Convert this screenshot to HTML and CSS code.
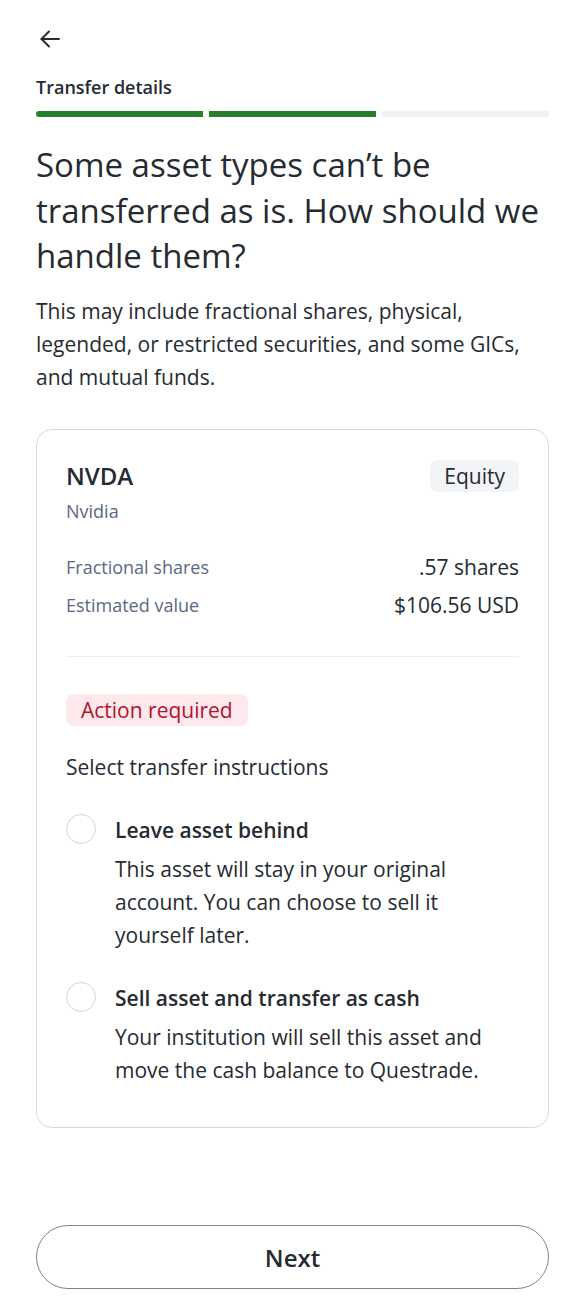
FILE: index.html
```html
<!DOCTYPE html>
<html lang="en">

<head>
    <meta charset="UTF-8">
    <meta name="viewport" content="width=device-width, initial-scale=1.0">
    <title>Transfer details</title>
    <link rel="stylesheet" href="styles.css">
</head>

<body>
    <div class="page">

        <!-- Top bar with back button -->
        <div class="topbar">
            <button class="back" aria-label="Back">
                <svg width="24" height="24" viewBox="0 0 24 24" fill="none" stroke="currentColor" stroke-width="2" stroke-linecap="round" stroke-linejoin="round">
                    <path d="M21 12H3.5" />
                    <path d="M11 4.5L3.5 12L11 19.5" />
                </svg>
            </button>
        </div>

        <!-- Step title and progress -->
        <div class="step">
            <p class="step-title">Transfer details</p>
            <div class="progress">
                <span class="bar done"></span>
                <span class="bar done"></span>
                <span class="bar"></span>
            </div>
        </div>

        <h1 class="heading">Some asset types can’t be transferred as is. How should we handle them?</h1>
        <p class="intro">This may include fractional shares, physical, legended, or restricted securities, and some GICs, and mutual funds.</p>

        <!-- Asset card -->
        <div class="card">
            <div class="card-head">
                <span class="symbol">NVDA</span>
                <span class="tag">Equity</span>
            </div>
            <p class="company">Nvidia</p>

            <div class="rows">
                <div class="row">
                    <span class="label">Fractional shares</span>
                    <span class="value">.57 shares</span>
                </div>
                <div class="row">
                    <span class="label">Estimated value</span>
                    <span class="value">$106.56 USD</span>
                </div>
            </div>

            <hr class="divider">

            <span class="alert">Action required</span>
            <p class="select-label">Select transfer instructions</p>

            <div class="options">
                <label class="option">
                    <input type="radio" name="instruction">
                    <span class="radio"></span>
                    <span class="option-text">
                        <span class="option-title">Leave asset behind</span>
                        <span class="option-desc">This asset will stay in your original account. You can choose to sell it yourself later.</span>
                    </span>
                </label>
                <label class="option">
                    <input type="radio" name="instruction">
                    <span class="radio"></span>
                    <span class="option-text">
                        <span class="option-title">Sell asset and transfer as cash</span>
                        <span class="option-desc">Your institution will sell this asset and move the cash balance to Questrade.</span>
                    </span>
                </label>
            </div>
        </div>

        <!-- Footer button -->
        <div class="footer">
            <button class="next">Next</button>
        </div>
    </div>
</body>

</html>
```

FILE: styles.css
```css
/* Reset */
* {
    margin: 0;
    padding: 0;
    box-sizing: border-box;
}

body {
    font-family: "Open Sans", "Noto Sans", sans-serif;
    color: #262b31;
    background-color: white;
}

/* Page wrapper fills the window so the button sits at the bottom */
.page {
    min-height: 100vh;
    display: flex;
    flex-direction: column;
    padding: 0 36px;
}

.topbar {
    height: 78px;
    display: flex;
    align-items: center;
}

.back {
    background: none;
    border: none;
    color: #262b31;
    display: flex;
    margin-left: 2px;
    cursor: pointer;
}

/* Step title and progress bars */
.step-title {
    font-size: 18px;
    font-weight: 600;
    line-height: 18px;
}

.progress {
    display: flex;
    gap: 6px;
    margin-top: 15px;
}

.bar {
    flex: 1;
    height: 6px;
    background-color: #f0f0f6;
}

.bar:first-child {
    border-radius: 3px 0 0 3px;
}

.bar:last-child {
    border-radius: 0 3px 3px 0;
}

.bar.done {
    background-color: #25802b;
}

.heading {
    font-size: 33px;
    font-weight: 400;
    line-height: 45.5px;
    margin-top: 25px;
}

.intro {
    font-size: 21px;
    line-height: 33px;
    margin-top: 16px;
}

/* Asset card */
.card {
    border: 1.5px solid #d3d9e4;
    border-radius: 16px;
    padding: 30px 29px 40px;
    margin-top: 35px;
}

.card-head {
    display: flex;
    justify-content: space-between;
    align-items: center;
    height: 32px;
}

.symbol {
    font-size: 24px;
    font-weight: 600;
}

.tag {
    background-color: #f3f4f7;
    border-radius: 8px;
    font-size: 21px;
    line-height: 32px;
    padding: 0 14px;
}

.company {
    font-size: 18px;
    line-height: 27px;
    color: #5a6883;
    margin-top: 6px;
}

.rows {
    display: flex;
    flex-direction: column;
    gap: 8px;
    margin-top: 27px;
}

.row {
    display: flex;
    justify-content: space-between;
    align-items: center;
    height: 30px;
}

.label {
    font-size: 18px;
    color: #5a6883;
}

.value {
    font-size: 21px;
}

.divider {
    border: none;
    border-top: 1px solid #eceef2;
    margin: 36px 0 37px;
}

.alert {
    display: inline-block;
    background-color: #fde8eb;
    color: #b0132f;
    border-radius: 8px;
    font-size: 21px;
    line-height: 32px;
    padding: 0 15px;
}

.select-label {
    font-size: 21px;
    line-height: 30px;
    margin-top: 26px;
}

/* Radio options */
.options {
    display: flex;
    flex-direction: column;
    gap: 30px;
    margin-top: 32px;
}

.option {
    display: flex;
    gap: 19px;
    cursor: pointer;
}

.option input {
    display: none;
}

.radio {
    flex: none;
    width: 30px;
    height: 30px;
    border: 1.5px solid #cdd4e1;
    border-radius: 50%;
}

.option-text {
    display: flex;
    flex-direction: column;
    gap: 6px;
}

.option-title {
    font-size: 21px;
    font-weight: 600;
    line-height: 33px;
}

.option-desc {
    font-size: 21px;
    line-height: 33px;
}

/* Footer */
.footer {
    margin-top: auto;
    padding: 40px 0 25px;
}

.next {
    width: 100%;
    height: 64px;
    border: 1.5px solid #75839c;
    border-radius: 32px;
    background-color: white;
    font-family: "Open Sans", "Noto Sans", sans-serif;
    font-size: 24px;
    font-weight: 600;
    color: #262b31;
    cursor: pointer;
}
```
